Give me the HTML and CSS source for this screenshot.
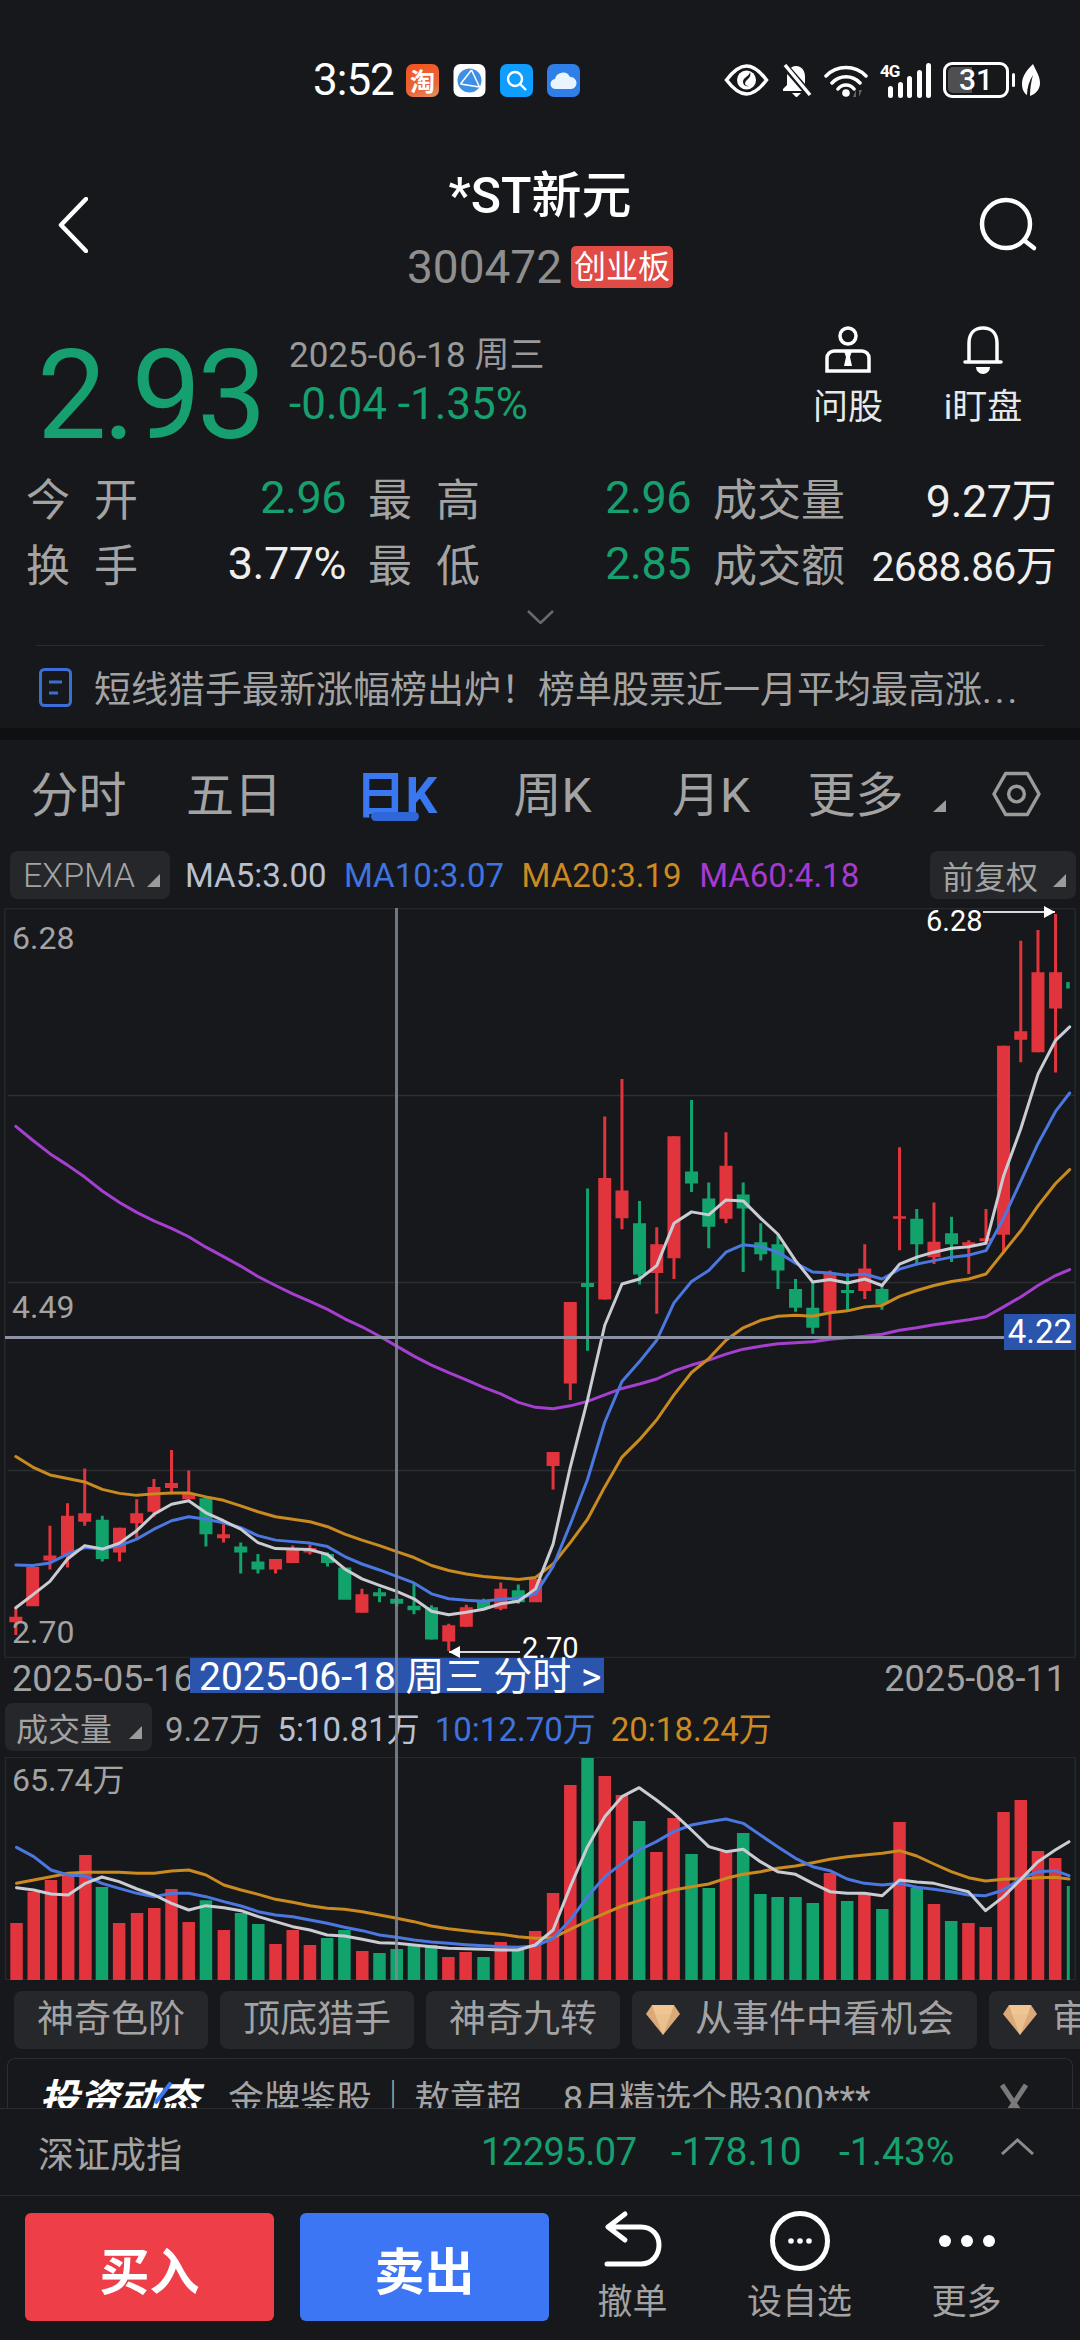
FILE: index.html
```html
<!DOCTYPE html>
<html lang="zh-CN">
<head>
<meta charset="utf-8">
<title>*ST新元</title>
<link rel="stylesheet" href="styles.css">
</head>
<body>
<div class="page">

<div class="status">
  <span class="clock">3:52</span>
  <span class="app app-tao">淘</span>
  <svg class="app" viewBox="0 0 32 33"><rect width="32" height="33" rx="7" fill="#fff"/><circle cx="16" cy="16.5" r="12" fill="#3d8fe8"/><path d="M7 20 18 6M7 20l19 3M18 6l8 17" stroke="#fff" stroke-width="1.5" fill="none"/></svg>
  <svg class="app" viewBox="0 0 33 33"><rect width="33" height="33" rx="7" fill="#0f9dff"/><circle cx="15" cy="15" r="7" fill="none" stroke="#fff" stroke-width="2.4"/><path d="M20 20l6 6" stroke="#fff" stroke-width="2.4"/></svg>
  <svg class="app" viewBox="0 0 33 33"><rect width="33" height="33" rx="7" fill="#2f7fe8"/><path d="M9 25a5 5 0 0 1-1-10 8 8 0 0 1 15-2 6 6 0 0 1 1 12z" fill="#eaf4ff"/></svg>
  <div class="status-right">
    <svg class="i-eye" viewBox="0 0 45 32"><path d="M2.5 16C10 6 16 2 22.5 2S35 6 42.500 16C35 26 29 30 22.500 30S10 26 2.500 16Z" fill="none" stroke="#fff" stroke-width="3.500"/><circle cx="22.500" cy="16" r="9.500" fill="#fff"/><path d="M26 8c-1 5-7 5-7 10 0 3 3 5 6 4-6 0-4-5-1-7 2-2 3-4 2-7z" fill="#17181b"/></svg>
    <svg class="i-bell" viewBox="0 0 31 33"><path d="M15 2c-6 0-9 5-9 11v8l-4 4v2h26v-2l-4-4v-8c0-6-3-11-9-11z" fill="#fff"/><path d="M11 29h9l-4 4h-1z" fill="#fff"/><path d="M3 1l26 30" stroke="#17181b" stroke-width="7"/><path d="M4 1l25 30" stroke="#fff" stroke-width="3.500"/></svg>
    <svg class="i-wifi" viewBox="0 0 44 33"><path d="M2 12a28 28 0 0 1 40 0M8 19a19 19 0 0 1 28 0M14 25a10 10 0 0 1 16 0" fill="none" stroke="#fff" stroke-width="3.500" stroke-linecap="round"/><circle cx="22" cy="29" r="3.800" fill="#fff"/><path d="M32 33v-7l-3 7zM35 26v7l3-7z" fill="#666"/></svg>
    <div class="signal">
      <span class="net">4G</span>
      <i class="bar b1"></i><i class="bar b2"></i><i class="bar b3"></i><i class="bar b4"></i><i class="bar b5"></i>
    </div>
    <div class="battery"><span class="charge"></span><span class="level">31</span></div>
    <svg class="i-leaf" viewBox="0 0 18 32"><path d="M11 0C5 6 0 12 0 20c0 5 2 9 5 11 0-7 2-14 6-20-2 7-3 14-3 21 6-2 10-7 10-13C18 12 14 7 11 0z" fill="#fff"/></svg>
  </div>
</div>

<header class="nav">
  <svg class="back" viewBox="0 0 30 56"><path d="M28 2 3 28l25 26" fill="none" stroke="#fff" stroke-width="4.500" stroke-linecap="round" stroke-linejoin="round"/></svg>
  <div class="nav-center">
    <div class="title">*ST新元</div>
    <div class="code-line"><span class="code">300472</span><span class="badge">创业板</span></div>
  </div>
  <svg class="search" viewBox="0 0 60 56"><circle cx="28" cy="27" r="24" fill="none" stroke="#fff" stroke-width="4.500"/><path d="M47 44l9 7" stroke="#fff" stroke-width="4.500" stroke-linecap="round"/></svg>
</header>

<section class="quote">
  <div class="price">2.93</div>
  <div class="quote-meta">
    <div class="q-date">2025-06-18 周三</div>
    <div class="q-change">-0.04 -1.35%</div>
  </div>
  <div class="quote-actions">
    <div class="qa">
      <svg viewBox="0 0 46 48"><circle cx="23" cy="10" r="8" fill="none" stroke="#fff" stroke-width="3.500"/><path d="M9 25h28a7 7 0 0 1 7 7v13H2V32a7 7 0 0 1 7-7z" fill="none" stroke="#fff" stroke-width="3.500"/><path d="M19 25h8l-2 6 2 9h-8l2-9z" fill="#fff"/></svg>
      <span>问股</span>
    </div>
    <div class="qa">
      <svg viewBox="0 0 36 48"><path d="M18 2C9 2 4 8 4 17v19H0v0h36v0h-4V17C32 8 27 2 18 2z" fill="none" stroke="#fff" stroke-width="3.500" stroke-linejoin="round"/><path d="M11 41h14a7 7 0 0 1-14 0z" fill="#fff"/></svg>
      <span>i盯盘</span>
    </div>
  </div>
</section>

<section class="stats">
  <div class="stat"><span class="lab">今 开</span><span class="val green">2.96</span></div>
  <div class="stat"><span class="lab">最 高</span><span class="val green">2.96</span></div>
  <div class="stat"><span class="lab wide">成交量</span><span class="val">9.27万</span></div>
  <div class="stat"><span class="lab">换 手</span><span class="val">3.77%</span></div>
  <div class="stat"><span class="lab">最 低</span><span class="val green">2.85</span></div>
  <div class="stat"><span class="lab wide">成交额</span><span class="val small">2688.86万</span></div>
</section>

<div class="more">
  <svg viewBox="0 0 27 14"><path d="M1 1l12.500 12L26 1" fill="none" stroke="#666a6f" stroke-width="2.500"/></svg>
</div>

<div class="news">
  <svg viewBox="0 0 33 39"><rect x="1.500" y="1.500" width="30" height="36" rx="4" fill="none" stroke="#3b6fd6" stroke-width="3"/><path d="M10 14h13M10 25h9" stroke="#3b6fd6" stroke-width="3"/></svg>
  <span class="news-text">短线猎手最新涨幅榜出炉！榜单股票近一月平均最高涨<span class="dots">...</span></span>
</div>

<div class="band"></div>

<nav class="tabs">
  <span class="tab">分时</span>
  <span class="tab">五日</span>
  <span class="tab on">日K</span>
  <span class="tab">周K</span>
  <span class="tab">月K</span>
  <span class="tab">更多</span>
  <span class="tab-tri"></span>
  <svg class="gear" viewBox="0 0 50 46"><path d="M14 2h22l12 21-12 21H14L2 23z" fill="none" stroke="#9b9b9b" stroke-width="3.500" stroke-linejoin="round"/><circle cx="25" cy="23" r="8" fill="none" stroke="#9b9b9b" stroke-width="3.500"/></svg>
</nav>

<div class="ind-row">
  <span class="chip chip-ex">EXPMA<i class="tri"></i></span>
  <span class="ma c-w">MA5:3.00</span>
  <span class="ma c-b">MA10:3.07</span>
  <span class="ma c-o">MA20:3.19</span>
  <span class="ma c-p">MA60:4.18</span>
  <span class="chip chip-adj">前复权<i class="tri"></i></span>
</div>

<div class="charts">
  <div class="plot">
    <svg class="plot-svg" viewBox="0 16 3136 1508" preserveAspectRatio="none">
      <rect class="frame" x="14" y="17" width="3108" height="1506"/>
      <path class="grid" d="M23 393H3122M23 769H3122M23 1147H3122"/>
      <path class="up wick" d="M46 1423V1478M145 1258V1346M196 1213V1342M246 1143V1258M347 1262V1330M397 1205V1283M447 1164V1240M498 1106V1195M548 1147V1205M649 1255V1292M800 1325V1354M850 1298V1333M900 1296V1316M1051 1385V1433M1303 1455V1510M1354 1417V1461M1454 1372V1428M1606 1110V1185M1656 808V1005M1756 435V803M1806 360V662M1907 658V832M1957 475V762M2108 467V650M2410 745V880M2511 692V802M2612 497V704M2712 608V732M2813 684V752M2863 621V692M2914 293V710M2964 82V326M3014 60V306M3065 28V347"/>
      <path class="up body" d="M46 1441V1452M95 1341V1420M145 1318V1328M196 1238V1318M246 1233V1250M347 1262V1312M397 1233V1253M447 1180V1230M498 1172V1182M548 1194V1205M649 1275V1283M800 1325V1346M850 1304V1333M900 1303V1312M1051 1396V1433M1303 1458V1491M1354 1422V1461M1454 1385V1425M1555 1365V1412M1606 1110V1138M1656 808V972M1756 559V803M1806 584V640M1907 692V750M1957 475V720M2108 534V641M2410 750V828M2511 741V786M2612 636V641M2712 687V718M2813 688V694M2863 680V686M2914 293V673M2964 264V281M3014 145V306M3065 145V218"/>
      <path class="down wick" d="M297 1238V1330M598 1200V1300M699 1292V1354M749 1315V1354M951 1312V1340M1102 1384V1412M1152 1398V1420M1202 1375V1436M1253 1418V1487M1404 1405V1425M1505 1376V1415M1706 580V906M1857 605V773M2008 402V587M2058 568V700M2158 568V748M2209 650V725M2259 672V782M2310 762V828M2360 768V872M2461 750V825M2561 775V824M2662 621V735M2763 637V728"/>
      <path class="down body" d="M297 1246V1325M598 1203V1275M699 1300V1312M749 1330V1346M951 1315V1333M1001 1342V1407M1102 1392V1400M1152 1405V1415M1202 1419V1428M1253 1422V1487M1404 1410V1425M1505 1388V1412M1706 770V778M1857 650V753M2008 546V570M2058 600V657M2158 592V620M2209 688V712M2259 692V745M2310 782V820M2360 820V860M2461 784V790M2561 782V812M2662 641V692M2763 670V692"/>
      <path class="down tip" d="M3101 165V178"/>
      <polyline class="ma-line l-p" points="46,455 95,483 145,510 196,533 246,557 297,585 347,608 397,628 447,645 498,660 548,677 598,698 649,717 699,736 749,757 800,775 850,792 900,807 951,823 1001,842 1051,858 1102,877 1152,897 1202,917 1253,935 1303,950 1354,965 1404,980 1454,993 1505,1010 1555,1020 1606,1023 1656,1017 1706,1008 1756,995 1806,982 1857,973 1907,963 1957,947 2008,935 2058,925 2108,913 2158,903 2209,897 2259,892 2310,890 2360,888 2410,883 2461,880 2511,877 2561,873 2612,865 2662,860 2712,854 2763,849 2813,844 2863,838 2914,818 2964,798 3014,775 3065,755 3106,743"/>
      <polyline class="ma-line l-o" points="46,1119 95,1140 145,1156 196,1163 246,1170 297,1185 347,1193 397,1197 447,1194 498,1192 548,1192 598,1200 649,1207 699,1218 749,1230 800,1240 850,1245 900,1250 951,1260 1001,1275 1051,1287 1102,1298 1152,1310 1202,1322 1253,1338 1303,1348 1354,1355 1404,1360 1454,1363 1505,1366 1555,1362 1606,1335 1656,1292 1706,1245 1756,1180 1806,1120 1857,1085 1907,1045 1957,995 2008,950 2058,922 2108,885 2158,860 2209,845 2259,837 2310,835 2360,837 2410,830 2461,826 2511,818 2561,815 2612,797 2662,785 2712,775 2763,767 2813,762 2863,752 2914,708 2964,665 3014,615 3065,570 3106,542"/>
      <polyline class="ma-line l-b" points="46,1337 95,1338 145,1333 196,1315 246,1302 297,1305 347,1298 397,1285 447,1265 498,1248 548,1240 598,1245 649,1252 699,1262 749,1278 800,1287 850,1290 900,1293 951,1300 1001,1320 1051,1335 1102,1347 1152,1360 1202,1373 1253,1395 1303,1405 1354,1408 1404,1410 1454,1406 1505,1404 1555,1395 1606,1340 1656,1255 1706,1165 1756,1050 1806,968 1857,928 1907,885 1957,810 2008,767 2058,745 2108,708 2158,693 2209,697 2259,708 2310,730 2360,748 2410,750 2461,755 2511,752 2561,762 2612,742 2662,732 2712,725 2763,718 2813,714 2863,705 2914,640 2964,565 3014,490 3065,425 3106,388"/>
      <polyline class="ma-line l-w" points="46,1423 95,1397 145,1370 196,1325 246,1298 297,1305 347,1293 397,1268 447,1235 498,1215 548,1208 598,1232 649,1248 699,1265 749,1292 800,1304 850,1305 900,1306 951,1316 1001,1345 1051,1365 1102,1378 1152,1390 1202,1405 1253,1430 1303,1437 1354,1432 1404,1426 1454,1415 1505,1410 1555,1385 1606,1295 1656,1140 1706,1005 1756,855 1806,772 1857,762 1907,735 1957,650 2008,627 2058,633 2108,603 2158,605 2209,640 2259,672 2310,725 2360,768 2410,763 2461,770 2511,762 2561,775 2612,732 2662,718 2712,708 2763,700 2813,697 2863,690 2914,555 2964,460 3014,350 3065,282 3106,255"/>
    </svg>
    <span class="axis y-hi">6.28</span>
    <span class="axis y-mid">4.49</span>
    <span class="axis y-lo">2.70</span>
    <span class="hline"></span>
    <span class="cur-price">4.22</span>
    <span class="note note-hi">6.28</span>
    <span class="arrow arrow-hi"></span>
    <span class="arrow arrow-lo"></span>
    <span class="note note-lo">2.70</span>
  </div>

  <div class="date-row">
    <span>2025-05-16</span>
    <span>2025-08-11</span>
    <span class="date-pick">2025-06-18 周三 分时 &gt;</span>
  </div>

  <div class="vol-row">
    <span class="chip chip-vol">成交量<i class="tri"></i></span>
    <span class="vm c-g">9.27万</span>
    <span class="vm c-w">5:10.81万</span>
    <span class="vm c-b">10:12.70万</span>
    <span class="vm c-o">20:18.24万</span>
  </div>

  <div class="vol-plot">
    <svg class="plot-svg" viewBox="0 351 1568 669" preserveAspectRatio="none">
      <rect class="frame" x="8" y="352" width="1553" height="667"/>
      <path class="up vbar" d="M24 1020V849M49 1020V755M74 1020V720M99 1020V702M124 1020V645M173 1020V849M199 1020V819M224 1020V804M249 1020V747M274 1020V846M325 1020V870M400 1020V912M425 1020V870M450 1020V915M526 1020V933M651 1020V951M676 1020V936M727 1020V906M777 1020V873M803 1020V759M828 1020V435M878 1020V408M903 1020V465M953 1020V636M978 1020V534M1054 1020V636M1205 1020V699M1255 1020V759M1306 1020V546M1356 1020V792M1406 1020V849M1431 1020V861M1457 1020V516M1482 1020V480M1507 1020V633M1532 1020V654"/>
      <path class="down vbar" d="M148 1020V741M299 1020V781M350 1020V819M375 1020V852M475 1020V894M500 1020V870M551 1020V939M576 1020V927M601 1020V915M626 1020V915M702 1020V951M752 1020V930M853 1020V354M928 1020V543M1004 1020V642M1029 1020V744M1079 1020V579M1104 1020V762M1129 1020V771M1155 1020V771M1180 1020V789M1230 1020V783M1281 1020V807M1331 1020V744M1381 1020V843"/>
      <path class="down vtip" d="M1551 1020V738"/>
      <polyline class="ma-line l-o" points="24,730 49,720 74,710 99,700 124,697 148,697 173,697 199,700 224,700 249,693 274,690 299,705 325,735 350,750 375,763 400,778 425,787 450,797 475,805 500,808 526,815 551,825 576,835 601,845 626,858 651,866 676,872 702,878 727,883 752,890 777,895 803,893 828,868 853,843 878,820 903,798 928,782 953,765 978,750 1004,740 1029,732 1054,715 1079,703 1104,695 1129,685 1155,678 1180,668 1205,658 1230,650 1255,645 1281,640 1306,632 1331,648 1356,672 1381,695 1406,713 1431,723 1457,718 1482,716 1507,713 1532,712 1552,717"/>
      <polyline class="ma-line l-b" points="24,622 49,650 74,690 99,705 124,708 148,730 173,745 199,760 224,770 249,760 274,760 299,770 325,785 350,798 375,815 400,825 425,830 450,840 475,850 500,862 526,872 551,885 576,892 601,900 626,906 651,910 676,914 702,917 727,920 752,922 777,918 803,895 828,840 853,770 878,710 903,670 928,630 953,605 978,575 1004,555 1029,545 1054,537 1079,550 1104,585 1129,620 1155,655 1180,680 1205,692 1230,717 1255,730 1281,735 1306,730 1331,742 1356,748 1381,755 1406,765 1431,767 1457,750 1482,715 1507,695 1532,692 1552,707"/>
      <polyline class="ma-line l-w" points="24,743 49,750 74,762 99,765 124,730 148,711 173,725 199,747 224,765 249,790 274,810 299,797 325,803 350,812 375,830 400,845 425,860 450,870 475,885 500,888 526,898 551,908 576,910 601,915 626,920 651,925 676,926 702,928 727,930 752,930 777,915 803,870 828,740 853,620 878,530 903,470 928,443 953,480 978,520 1004,570 1029,620 1054,635 1079,628 1104,665 1129,695 1155,703 1180,730 1205,755 1230,760 1255,760 1281,767 1306,720 1331,726 1356,730 1381,743 1406,755 1431,812 1457,770 1482,718 1507,665 1532,630 1552,605"/>
    </svg>
    <span class="axis y-vol">65.74万</span>
  </div>

  <span class="vline"></span>
</div>

<div class="tools">
  <span class="tool">神奇色阶</span>
  <span class="tool">顶底猎手</span>
  <span class="tool">神奇九转</span>
  <span class="tool"><svg class="gem" viewBox="0 0 34 30"><path d="M6 0h22l6 9-17 21L0 9z" fill="#dba877"/><path d="M6 0h22l-3 9H9z" fill="#f0c594"/><path d="M9 9h16l-8 21z" fill="#eac08f"/></svg>从事件中看机会</span>
  <span class="tool tool-cut"><svg class="gem" viewBox="0 0 34 30"><path d="M6 0h22l6 9-17 21L0 9z" fill="#dba877"/><path d="M6 0h22l-3 9H9z" fill="#f0c594"/><path d="M9 9h16l-8 21z" fill="#eac08f"/></svg>审</span>
</div>

<div class="ad">
  <span class="ad-logo">投资动态</span>
  <span class="ad-text">金牌鉴股<span class="ad-sep">｜</span>敖章超</span>
  <span class="ad-text ad-text2">8月精选个股300***</span>
  <svg class="ad-close" viewBox="0 0 28 40"><path d="M2 2l24 36M26 2 2 38" stroke="#7a7a7a" stroke-width="5" fill="none"/></svg>
</div>

<div class="index-bar">
  <span class="idx-name">深证成指</span>
  <span class="idx-val v1">12295.07</span>
  <span class="idx-val v2">-178.10</span>
  <span class="idx-val v3">-1.43%</span>
  <svg class="idx-up" viewBox="0 0 35 17"><path d="M2 16 17.500 2 33 16" fill="none" stroke="#8b8b8b" stroke-width="3"/></svg>
</div>

<div class="bottom">
  <button class="btn buy">买入</button>
  <button class="btn sell">卖出</button>
  <div class="act">
    <svg viewBox="0 0 60 62"><path d="M22 4 5 17l17 13M7 17h31c11 0 18 8 18 18s-7 19-18 19H4" fill="none" stroke="#fff" stroke-width="5" stroke-linecap="round" stroke-linejoin="round"/></svg>
    <span>撤单</span>
  </div>
  <div class="act">
    <svg viewBox="0 0 60 62"><circle cx="30" cy="31" r="27.500" fill="none" stroke="#fff" stroke-width="5"/><circle cx="21" cy="31" r="2.800" fill="#fff"/><circle cx="30" cy="31" r="2.800" fill="#fff"/><circle cx="39" cy="31" r="2.800" fill="#fff"/></svg>
    <span>设自选</span>
  </div>
  <div class="act">
    <svg viewBox="0 0 60 62"><circle cx="8" cy="31" r="6" fill="#fff"/><circle cx="30" cy="31" r="6" fill="#fff"/><circle cx="52" cy="31" r="6" fill="#fff"/></svg>
    <span>更多</span>
  </div>
</div>

</div>
</body>
</html>
```
FILE: styles.css
```css
* { box-sizing: border-box; }
html, body { margin: 0; padding: 0; background: #17181b; }
body { font-family: Roboto, "Noto Sans CJK SC", sans-serif; color: #a3a3a3; }
.page { width: 1080px; height: 2340px; overflow: hidden; background: #17181b; }
.green { color: #17a06f; }

/* status bar */
.status { height: 60px; margin-top: 50px; padding: 0 40px 0 313px; display: flex; align-items: center; gap: 14px; }
.clock { color: #fff; font-size: 44px; width: 79px; letter-spacing: -1px; }
.app { width: 33px; height: 33px; flex: none; }
.app-tao { border-radius: 7px; background: linear-gradient(160deg, #f2541f, #e8683a 70%, #d99a70); color: #fff; font: 700 25px/33px "Noto Sans CJK SC", sans-serif; text-align: center; }
.status-right { margin-left: auto; display: flex; align-items: center; gap: 12px; }
.i-eye { width: 45px; height: 32px; }
.i-bell { width: 31px; height: 33px; }
.i-wifi { width: 44px; height: 33px; }
.signal { position: relative; width: 51px; height: 35px; display: flex; align-items: flex-end; justify-content: flex-end; gap: 4.500px; }
.net { position: absolute; left: 0; top: -1px; color: #fff; font-size: 17px; font-weight: 700; line-height: 18px; letter-spacing: -1px; }
.bar { width: 5px; background: #fff; border-radius: 3px; }
.b1 { height: 12px; } .b2 { height: 16px; } .b3 { height: 22px; } .b4 { height: 28px; } .b5 { height: 35px; }
.battery { position: relative; width: 66px; height: 36px; border: 3px solid #fff; border-radius: 9px; overflow: visible; display: flex; align-items: center; justify-content: center; }
.battery::after { content: ""; position: absolute; right: -9px; top: 8px; width: 3px; height: 14px; background: #fff; border-radius: 2px; }
.charge { position: absolute; left: 2px; top: 2px; bottom: 2px; width: 24px; background: #4f4f52; border-radius: 5px 0 0 5px; }
.level { position: relative; color: #fff; font-size: 30px; font-weight: 500; line-height: 30px; }
.i-leaf { width: 18px; height: 32px; margin-left: 1px; }

/* header */
.nav { height: 123px; margin-top: 58px; padding: 0 42px; display: flex; align-items: flex-start; }
.back { width: 30px; height: 56px; margin: 29px 14px 0 16px; flex: none; }
.search { width: 60px; height: 56px; margin-top: 29px; flex: none; }
.nav-center { flex: 1; text-align: center; }
.title { color: #fff; font-size: 50px; line-height: 56px; font-weight: 500; }
.code-line { margin-top: 19px; height: 48px; display: flex; align-items: center; justify-content: center; gap: 9px; }
.code { font-size: 46px; line-height: 48px; color: #8f8f8f; }
.badge { height: 42px; width: 102px; background: #e04b46; border-radius: 5px; color: #fff; font-size: 32px; line-height: 42px; text-align: center; }

/* quote */
.quote { height: 173px; padding: 39px 52px 0 37px; display: flex; align-items: flex-start; }
.price { width: 252px; font-size: 124px; font-weight: 400; line-height: 134px; color: #17a06f; letter-spacing: -4px; margin-top: -1px; }
.quote-meta { padding-top: 6px; }
.q-date { font-size: 35px; line-height: 40px; color: #9a9a9a; }
.q-change { font-size: 44px; line-height: 48px; margin-top: 4px; color: #17a06f; }
.quote-actions { margin-left: auto; display: flex; gap: 45px; }
.qa { width: 90px; display: flex; flex-direction: column; align-items: center; }
.qa svg { height: 48px; width: 46px; margin-top: -4px; }
.qa span { color: #e8e8e8; font-size: 35px; line-height: 44px; margin-top: 12px; white-space: nowrap; }

/* stats */
.stats { height: 132px; padding: 0 26px; display: grid; grid-template-columns: 320px 323px 343px; grid-auto-rows: 66px; column-gap: 22px; }
.stat { display: flex; justify-content: space-between; align-items: center; }
.lab { width: 112px; font-size: 44px; text-align-last: justify; color: #a3a3a3; }
.lab.wide { width: 132px; font-size: 44px; }
.val { font-size: 45px; color: #eee; letter-spacing: -0.500px; white-space: nowrap; }
.val.small { font-size: 41px; letter-spacing: -0.700px; }
.val.green { color: #17a06f; }

.more { height: 50px; margin: 0 36px; border-bottom: 1px solid #2a2c2f; display: flex; justify-content: center; padding-top: 14px; }
.more svg { width: 27px; height: 14px; }

.news { height: 82px; padding-left: 39px; display: flex; align-items: center; gap: 22px; }
.news svg { width: 33px; height: 39px; }
.news-text { font-size: 37px; color: #a3a3a3; white-space: nowrap; }
.dots { letter-spacing: 3px; }

.band { height: 12px; background: #0f1012; }

/* tabs */
.tabs { position: relative; height: 111px; display: grid; grid-template-columns: 157px 154px 171px 141px 176px 113px 34px 46px 49px; align-items: center; padding-bottom: 10px; }
.tab { position: relative; text-align: center; font-size: 48px; color: #a3a3a3; }
.tab.on { color: #3a78f2; font-weight: 700; font-size: 50px; }
.tab.on::after { content: ""; position: absolute; left: calc(50% - 26px); top: 57px; width: 48px; height: 9px; border-radius: 5px; background: #2f67d8; }
.tab-tri { width: 0; height: 0; border-left: 13px solid transparent; border-bottom: 12px solid #9b9b9b; margin: 30px 0 0 21px; }
.gear { grid-column: 9; width: 49px; height: 46px; margin-top: 6px; }

/* indicator rows */
.ind-row { height: 48px; margin: 0 4px 9px 10px; display: flex; align-items: center; }
.chip { position: relative; display: inline-flex; align-items: center; height: 48px; background: #25272a; border-radius: 8px; color: #a3a3a3; }
.chip-ex { width: 160px; padding-left: 13px; font-size: 34px; margin-right: 15px; font-weight: 300; }
.chip-adj { width: 146px; padding-left: 12px; font-size: 32px; margin-left: auto; }
.chip-vol { width: 147px; padding-left: 11px; font-size: 32px; margin-right: 13px; }
.tri { position: absolute; right: 10px; bottom: 12px; width: 0; height: 0; border-left: 13px solid transparent; border-bottom: 13px solid #9b9b9b; }
.ma { font-size: 33px; margin-right: 17.500px; white-space: nowrap; }
.c-w { color: #b9c0d0; } .c-b { color: #3f74e0; } .c-o { color: #cc8a22; } .c-p { color: #a63ad0; } .c-g { color: #a3a3a3; }

/* charts */
.charts { position: relative; }
.plot { position: relative; height: 750px; }
.vol-plot { position: relative; height: 223px; margin-top: 6px; }
.plot-svg { display: block; width: 1080px; height: 100%; }
.plot-svg path, .plot-svg polyline, .plot-svg rect { vector-effect: non-scaling-stroke; fill: none; }
.frame { stroke: #26282b; stroke-width: 1.500; }
.grid { stroke: #2c2e31; stroke-width: 1.500; }
.up { stroke: #e2343c; } .down { stroke: #12a36c; }
.wick { stroke-width: 3; }
.body { stroke-width: 13; }
.tip { stroke-width: 3.500; }
.vbar { stroke-width: 12.500; }
.vtip { stroke-width: 3; }
.ma-line { stroke-width: 3; stroke-linejoin: round; stroke-linecap: round; }
.l-w { stroke: #c9ccd3; } .l-b { stroke: #4a78e0; } .l-o { stroke: #c98a20; } .l-p { stroke: #a53fd0; }

.axis { position: absolute; left: 12px; font-size: 32px; line-height: 34px; color: #a3a3a3; }
.y-hi { top: 13px; } .y-mid { top: 382px; } .y-lo { top: 707px; }
.y-vol { top: 6px; font-size: 32px; }
.hline { position: absolute; left: 5px; top: 428px; width: 1000px; height: 3px; background: #8a92a3; }
.cur-price { position: absolute; left: 1004px; top: 406px; width: 72px; height: 36px; background: #2b55ad; color: #fff; font-size: 33px; line-height: 36px; text-align: center; }
.note { position: absolute; color: #fff; font-size: 29px; line-height: 30px; }
.note-hi { left: 926px; top: -2px; }
.note-lo { left: 522px; top: 727px; line-height: 26px; z-index: 1; }
.arrow { position: absolute; height: 1.500px; background: #d8d8d8; }
.arrow::after { content: ""; position: absolute; top: -5px; border-top: 6px solid transparent; border-bottom: 6px solid transparent; }
.arrow-hi { left: 983px; top: 3px; width: 72px; }
.arrow-hi::after { right: 0; border-left: 11px solid #fff; }
.arrow-lo { left: 449px; top: 743px; width: 71px; }
.arrow-lo::after { left: 0; border-right: 11px solid #fff; }

.date-row { position: relative; height: 35px; padding: 0 14px 0 12px; display: flex; justify-content: space-between; font-size: 36px; line-height: 42px; color: #a3a3a3; }
.date-pick { position: absolute; left: 190px; top: 0; width: 414px; height: 35px; background: #2b55ad; color: #fff; font-size: 39px; line-height: 38px; padding-left: 9px; white-space: nowrap; }

.vol-row { height: 48px; margin-top: 10px; padding-left: 5px; display: flex; align-items: center; }
.vm { font-size: 33px; margin-right: 15px; white-space: nowrap; }
.vline { position: absolute; left: 395px; top: 0; bottom: 0; width: 3px; background: #7f8796; opacity: .85; }

/* tools */
.tools { height: 58px; margin-top: 11px; padding-left: 14px; display: flex; gap: 12px; overflow: hidden; white-space: nowrap; }
.tool { flex: none; height: 58px; padding: 0 23px; background: #25272a; border-radius: 8px; font-size: 37px; line-height: 56px; display: flex; align-items: center; color: #a3a3a3; }
.gem { width: 34px; height: 30px; margin: 0 15px 0 -9px; flex: none; }
.tool-cut { width: 120px; }

/* ad */
.ad { position: relative; height: 50px; margin: 9px 7px 0; padding: 17px 0 0 31px; border: 1.500px solid #2b2d30; border-bottom: 0; border-radius: 8px 8px 0 0; overflow: hidden; display: flex; align-items: flex-start; white-space: nowrap; }
.ad-logo { position: relative; width: 163px; color: #fff; font-size: 40px; font-weight: 700; font-style: italic; line-height: 48px; flex: none; }
.ad-logo::after { content: ""; position: absolute; left: 122px; top: 4px; width: 4px; height: 26px; background: #3a78f2; transform: rotate(38deg); }
.ad-text { font-size: 36px; line-height: 48px; margin-left: 26px; color: #a3a3a3; }
.ad-text2 { margin-left: 41px; }
.ad-sep { margin: 0 3px; }
.ad-close { position: absolute; right: 44px; top: 24px; width: 28px; height: 40px; }

/* index bar */
.index-bar { height: 88px; border-top: 1px solid #2a2c2f; border-bottom: 1px solid #2a2c2f; padding-left: 38px; display: flex; align-items: center; background: #17181b; }
.idx-name { width: 443px; font-size: 36px; color: #a3a3a3; }
.idx-val { font-size: 38px; color: #17a06f; white-space: nowrap; }
.v1 { width: 190px; letter-spacing: -0.500px; } .v2 { width: 168px; font-size: 39px; }
.v3 { width: 161px; font-size: 39px; }
.idx-up { width: 35px; height: 17px; margin-top: -12px; }

/* bottom */
.bottom { height: 144px; padding: 17px 0 0 25px; display: flex; align-items: flex-start; }
.btn { width: 249px; height: 108px; border: 0; border-radius: 6px; margin-right: 26px; color: #fff; font: 700 50px/108px "Noto Sans CJK SC", sans-serif; }
.buy { background: #ee3e48; }
.sell { background: #3c76f5; margin-right: 0; }
.act { width: 167px; display: flex; flex-direction: column; align-items: center; margin-top: -3px; }
.act svg { width: 60px; height: 62px; }
.act span { margin-top: 11px; font-size: 35px; line-height: 40px; color: #a3a3a3; }
```
